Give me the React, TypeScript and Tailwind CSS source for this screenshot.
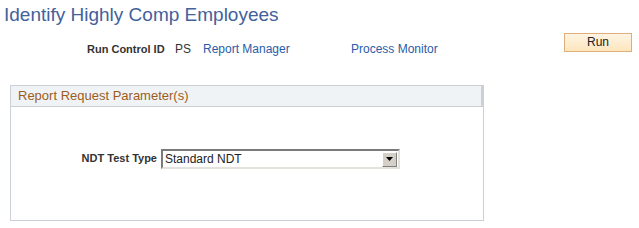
export default function App() {
    return (
        <div className="w-[639px] h-[228px] bg-white font-['Liberation_Sans',Arial,sans-serif] text-[#333333] overflow-hidden">
            <h1 className="ml-[4px] pt-[4px] text-[19px] leading-[22px] text-[#43619a]">Identify Highly Comp Employees</h1>

            <div className="flex items-start mt-[7px] h-[19px]">
                <div className="flex items-center pl-[87px] mt-[9px] text-[12px] leading-[14px] whitespace-nowrap">
                    <span className="w-[88px] shrink-0 text-[11px] font-bold">Run Control ID</span>
                    <span className="w-[28px] shrink-0">PS</span>
                    <a className="w-[148px] shrink-0 text-[#2a5ca8]">Report Manager</a>
                    <a className="text-[#2a5ca8]">Process Monitor</a>
                </div>
                <button className="ml-auto mr-[7px] w-[68px] h-[19px] border border-[#e0ae78] bg-gradient-to-b from-[#fef4e3] to-[#fde6bd] text-[12px] leading-[17px] text-[#222222]">
                    Run
                </button>
            </div>

            <div className="ml-[10px] mt-[33px] w-[474px] h-[136px] border border-[#cbd0d6] flex flex-col">
                <div className="h-[21px] bg-[#eff3f5] border-b border-r-2 border-[#cbd0d6] pl-[7px] text-[13px] leading-[20px] text-[#9e5c1c] whitespace-nowrap">
                    Report Request Parameter(s)
                </div>
                <div className="flex items-center mt-[42px] pl-[66px]">
                    <span className="w-[84px] shrink-0 whitespace-nowrap text-right pr-[4px] text-[11px] font-bold leading-[14px] -mt-[2px]">NDT Test Type</span>
                    <div className="w-[239px] h-[20px] shrink-0 flex items-center border-2 border-t-[#7a7a7a] border-l-[#7a7a7a] border-b-[#e4e2dc] border-r-[#e4e2dc] bg-white">
                        <span className="flex-1 pl-[2px] text-[12px] leading-[14px] text-[#222222]">Standard NDT</span>
                        <div className="w-[15px] h-[15px] mr-[1px] bg-[#d4d0c8] border border-t-white border-l-white border-b-[#808080] border-r-[#808080] flex items-center justify-center">
                            <svg width="7" height="4" viewBox="0 0 7 4">
                                <path d="M0 0 H7 L3.5 4 Z" fill="#000000" />
                            </svg>
                        </div>
                    </div>
                </div>
            </div>
        </div>
    );
}
